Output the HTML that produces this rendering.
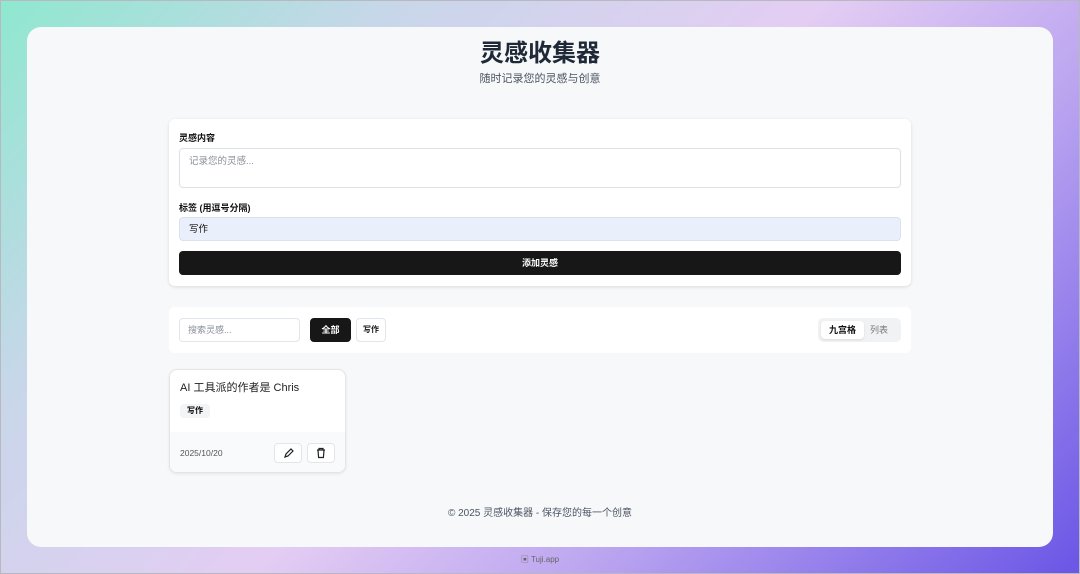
<!DOCTYPE html>
<html><head><meta charset="utf-8"><style>
*{box-sizing:border-box;margin:0;padding:0}
body{width:1080px;height:574px;overflow:hidden;font-family:"Liberation Sans","Noto Sans CJK SC",sans-serif;position:relative;
background:linear-gradient(135deg,#8ee8cf 0%,#c9d6ea 25%,#e4cdf3 50%,#bba5f0 70%,#6a55e6 100%);border:1px solid #b8b8c0}
.card{position:absolute;left:26px;top:26px;width:1026px;height:520px;background:#f7f8fa;border-radius:14px}
h1{position:absolute;top:12px;width:100%;text-align:center;font-size:24px;line-height:30px;font-weight:700;color:#1f2937}
.sub{position:absolute;top:45px;width:100%;text-align:center;font-size:11px;line-height:14px;color:#4b5563}
.panel{position:absolute;left:142px;width:742px;background:#fff;border-radius:6px}
.f{top:92px;height:167px;box-shadow:0 1px 3px rgba(0,0,0,.12)}
.lbl{position:absolute;left:10px;font-size:9px;line-height:12px;font-weight:700;color:#111}
.ta{position:absolute;left:10px;width:722px;border:1px solid #dde1e6;border-radius:4px;font-size:9.5px;line-height:12px;color:#8a8f98;padding:7px 9px}
.btn{position:absolute;left:10px;top:132px;width:722px;height:24px;background:#171717;border-radius:4px;color:#fff;font-size:9px;font-weight:700;text-align:center;line-height:24px}
.bar{top:280px;height:46px}
.s{position:absolute;top:11px;height:24px;border:1px solid #e2e5ea;border-radius:4px;font-size:9px;line-height:22px}
.it{position:absolute;left:142px;top:342px;width:177px;height:104px;background:#fff;border:1px solid #e3e5e8;border-radius:8px;overflow:hidden;box-shadow:0 1px 3px rgba(0,0,0,.08)}
.ib{position:absolute;width:28px;height:20px;border:1px solid #e2e5ea;border-radius:4px;top:73px;background:#fff}
</style></head><body>
<div class="card">
<h1>灵感收集器</h1>
<div class="sub">随时记录您的灵感与创意</div>
<div class="panel f">
<div class="lbl" style="top:13px">灵感内容</div>
<div class="ta" style="top:29px;height:40px">记录您的灵感...</div>
<div class="lbl" style="top:83px">标签 (用逗号分隔)</div>
<div class="ta" style="top:98px;height:24px;background:#e9effb;border-color:#dbe2ee;color:#111;padding:6px 9px">写作</div>
<div class="btn">添加灵感</div>
</div>
<div class="panel bar">
<div class="s" style="left:10px;width:121px;padding-left:8px;color:#8a8f98">搜索灵感...</div>
<div class="s" style="left:141px;width:41px;background:#171717;border-color:#171717;color:#fff;text-align:center;font-weight:700">全部</div>
<div class="s" style="left:187px;width:30px;text-align:center;font-weight:700;font-size:8px;color:#111">写作</div>
<div style="position:absolute;left:649px;top:11px;width:83px;height:24px;background:#f1f2f4;border-radius:5px">
<div style="position:absolute;left:3px;top:3px;width:43px;height:18px;background:#fff;border-radius:4px;box-shadow:0 1px 2px rgba(0,0,0,.1);font-size:9px;font-weight:700;text-align:center;line-height:18px;color:#111">九宫格</div>
<div style="position:absolute;left:52px;top:3px;font-size:9px;line-height:18px;color:#777">列表</div>
</div>
</div>
<div class="it">
<div style="position:absolute;left:10px;top:11px;font-size:11px;line-height:14px;color:#222">AI 工具派的作者是 Chris</div>
<div style="position:absolute;left:10px;top:34px;width:30px;height:14px;background:#f3f4f6;border-radius:4px;font-size:8px;font-weight:700;text-align:center;line-height:14px">写作</div>
<div style="position:absolute;left:0;top:62px;width:100%;height:42px;background:#f9fafb"></div>
<div style="position:absolute;left:10px;top:78px;font-size:8.5px;line-height:11px;color:#555">2025/10/20</div>
<div class="ib" style="left:104px"><svg width="26" height="18" viewBox="0 0 26 18"><path d="M10 13l1-3 5-5 2 2-5 5z" fill="none" stroke="#222" stroke-width="1.2"/></svg></div>
<div class="ib" style="left:137px"><svg width="26" height="18" viewBox="0 0 26 18"><path d="M9 6h8M11 6V4.5h4V6M10 6l.6 7.5h4.8L16 6" fill="none" stroke="#222" stroke-width="1.2"/></svg></div>
</div>
<div style="position:absolute;top:480px;width:100%;text-align:center;font-size:10px;line-height:14px;color:#4b5563">© 2025 灵感收集器 - 保存您的每一个创意</div>
</div>
<div style="position:absolute;top:554px;width:100%;text-align:center;font-size:8px;line-height:10px;color:#666">▣ Tuji.app</div>
</body></html>
